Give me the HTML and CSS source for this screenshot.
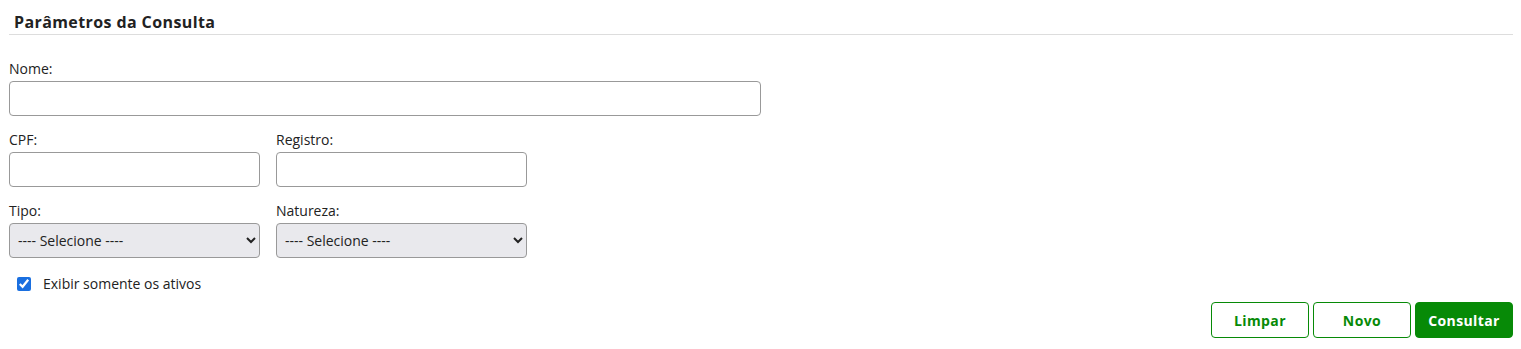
FILE: index.html
```html
<!DOCTYPE html>
<html lang="pt-BR">
<head>
    <meta charset="UTF-8">
    <meta name="viewport" content="width=device-width, initial-scale=1.0">
    <title>Parâmetros da Consulta</title>
    <link rel="stylesheet" href="styles.css">
</head>
<body>

<div class="container">
    <h2 class="titulo">Parâmetros da Consulta</h2>

    <div class="campo">
        <label for="nome">Nome:</label>
        <input type="text" id="nome" class="largo">
    </div>

    <div class="linha">
        <div class="campo">
            <label for="cpf">CPF:</label>
            <input type="text" id="cpf">
        </div>
        <div class="campo">
            <label for="registro">Registro:</label>
            <input type="text" id="registro">
        </div>
    </div>

    <div class="linha">
        <div class="campo">
            <label for="tipo">Tipo:</label>
            <select id="tipo">
                <option>---- Selecione ----</option>
            </select>
        </div>
        <div class="campo">
            <label for="natureza">Natureza:</label>
            <select id="natureza">
                <option>---- Selecione ----</option>
            </select>
        </div>
    </div>

    <div class="check">
        <input type="checkbox" id="ativos" checked>
        <label for="ativos">Exibir somente os ativos</label>
    </div>

    <div class="acoes">
        <button class="btn">Limpar</button>
        <button class="btn">Novo</button>
        <button class="btn primario">Consultar</button>
    </div>
</div>

</body>
</html>
```

FILE: styles.css
```css
body {
    font-family: "Open Sans", Arial, sans-serif;
    font-size: 14px;
    color: #222;
    background-color: #fff;
    margin: 0;
    padding: 0;
}
.container {
    padding: 12px 8px 0 9px;
}
.titulo {
    font-size: 16px;
    font-weight: 700;
    letter-spacing: 0.4px;
    color: #222;
    margin: 0;
    padding: 0 0 2px 5px;
    border-bottom: 1px solid #ddd;
    line-height: 20px;
}
.campo {
    display: flex;
    flex-direction: column;
}
.titulo + .campo {
    margin-top: 25px;
}
.campo label {
    line-height: 17px;
    margin-bottom: 4px;
}
.linha {
    display: flex;
    gap: 16px;
    margin-top: 15px;
}
input[type="text"], select {
    box-sizing: border-box;
    width: 251px;
    height: 35px;
    border: 1px solid #999;
    border-radius: 4px;
    font-family: inherit;
    font-size: 14px;
    padding: 0 6px;
    background: #fff;
}
input.largo {
    width: 752px;
}
select {
    background: #e9e9ed;
    color: #222;
    padding: 0 4px;
}
.check {
    display: flex;
    align-items: center;
    margin-top: 16px;
    padding-left: 8px;
}
.check input {
    width: 14px;
    height: 14px;
    margin: 0 12px 0 0;
    accent-color: #1a6fe0;
}
.acoes {
    display: flex;
    justify-content: flex-end;
    gap: 4px;
    margin-top: 9px;
}
.btn {
    width: 98px;
    height: 36px;
    background: #fff;
    color: #078a07;
    border: 1px solid #078a07;
    border-radius: 4px;
    font-family: "Open Sans", Arial, sans-serif;
    font-weight: 700;
    font-size: 14px;
    letter-spacing: 0.4px;
    cursor: pointer;
}
.btn.primario {
    background: #078a07;
    color: #fff;
}
```
